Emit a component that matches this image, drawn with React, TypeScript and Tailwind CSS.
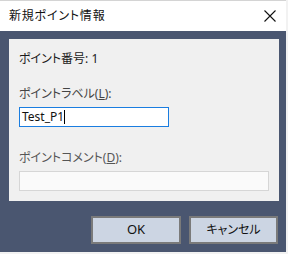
import React from 'react';

const jp = "font-['Noto_Sans','Noto_Sans_CJK_JP',sans-serif] [font-feature-settings:'palt']";

export default function App() {
  return (
    <div className={`w-[288px] h-[254px] bg-[#f2f2f2] ${jp}`}>
      <div className="w-[286px] h-[252px] flex flex-col border-t border-[#d4d4d4]">
        <div className="h-[30px] bg-white flex items-center justify-between pl-[9px] pr-[8px]">
          <span className="text-[12px] text-[#111] tracking-[0.8px]">新規ポイント情報</span>
          <svg width="14" height="14" viewBox="0 0 14 14" className="mr-[1px]">
            <path d="M1.5 1.5 L12.5 12.5 M12.5 1.5 L1.5 12.5" stroke="#111" strokeWidth="1.1" />
          </svg>
        </div>
        <div className="flex-1 bg-[#4a5670] pt-[8px] pl-[9px] pr-[7px] flex flex-col">
          <div className="h-[162px] bg-[#f0f0f0] pl-[10px] pr-[10px] pt-[12px]">
            <p className="text-[12px] leading-[16px] text-[#1a1a1a]">
              ポイント番号: <span>1</span>
            </p>
            <p className="mt-[19px] text-[12px] leading-[16px] text-[#444]">
              ポイントラベル(<span className="underline">L</span>):
            </p>
            <div className="mt-[5px] w-[150px] h-[20px] border border-[#1a7de0] bg-white flex items-center px-[2px]">
              <span className="text-[12px] text-[#111]">Test_P1</span>
              <span className="w-px h-[14px] bg-black" />
            </div>
            <p className="mt-[23px] text-[12px] leading-[16px] text-[#555]">
              ポイントコメント(<span className="underline">D</span>):
            </p>
            <div className="mt-[5px] w-[250px] h-[20px] border border-[#d6d6d6] bg-[#fafafa]" />
          </div>
          <div className="mt-[15px] flex justify-end gap-[8px] pr-[1px]">
            <button className={`w-[90px] h-[28px] bg-[#ccd5e3] border-2 border-[#7a7a7a] text-[13px] text-[#111] ${jp}`}>
              OK
            </button>
            <button className={`w-[89px] h-[28px] bg-[#ccd5e3] border-2 border-[#7a7a7a] text-[12px] text-[#111] ${jp}`}>
              キャンセル
            </button>
          </div>
        </div>
      </div>
    </div>
  );
}
